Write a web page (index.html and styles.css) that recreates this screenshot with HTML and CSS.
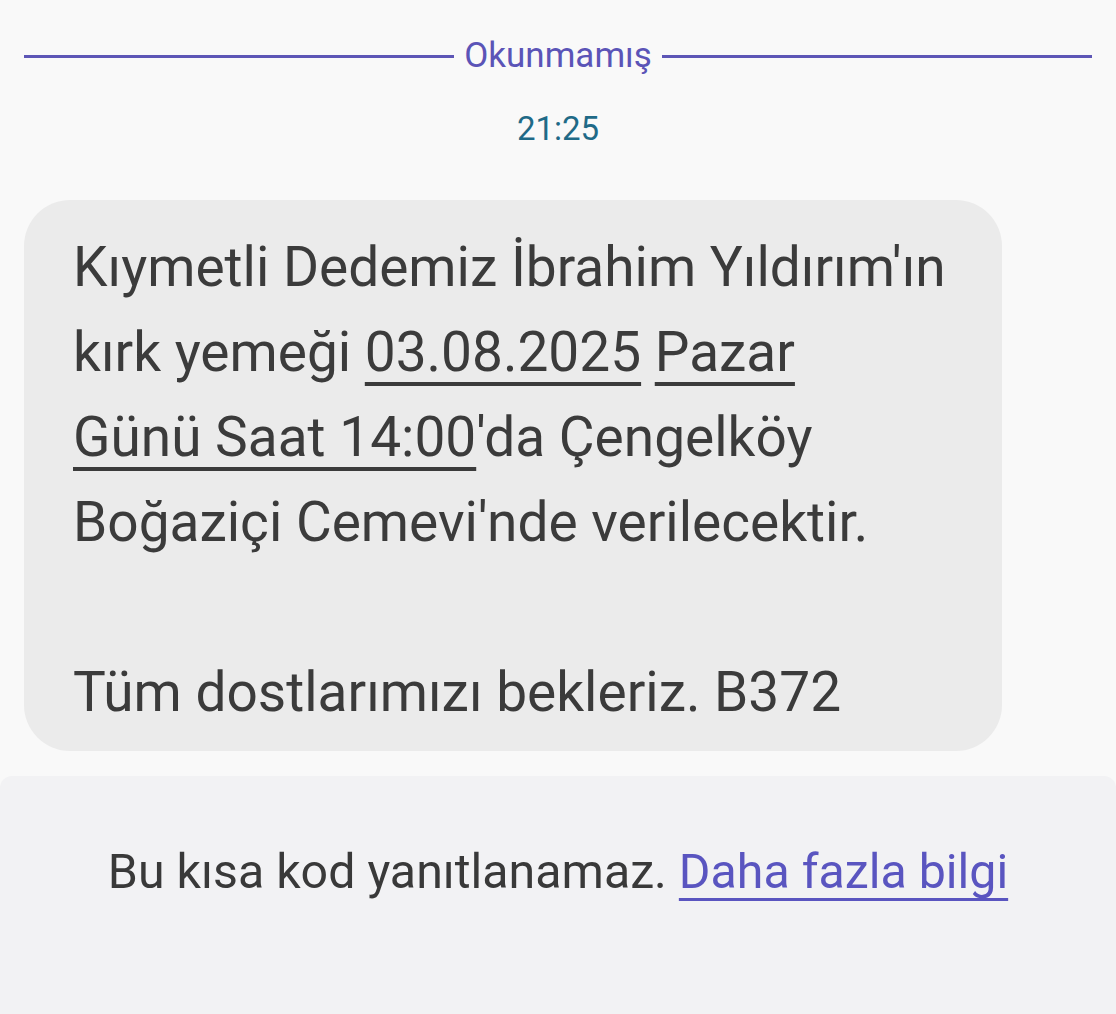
FILE: index.html
```html
<!DOCTYPE html>
<html lang="tr">
<head>
    <meta charset="UTF-8">
    <meta name="viewport" content="width=device-width, initial-scale=1.0">
    <title>Mesajlar</title>
    <link rel="stylesheet" href="styles.css">
</head>
<body>
    <main class="thread">
        <!-- Unread divider -->
        <div class="unread-divider">
            <span class="unread-line"></span>
            <span class="unread-label">Okunmamış</span>
            <span class="unread-line"></span>
        </div>

        <div class="timestamp">21:25</div>

        <div class="bubble">
            <p>Kıymetli Dedemiz İbrahim Yıldırım'ın kırk yemeği <u>03.08.2025</u> <u>Pazar<br>Günü Saat 14:00</u>'da Çengelköy Boğaziçi Cemevi'nde verilecektir.</p>
            <p class="gap">Tüm dostlarımızı bekleriz. B372</p>
        </div>
    </main>

    <footer class="reply-note">
        <p>Bu kısa kod yanıtlanamaz. <a href="#" class="more-link">Daha fazla bilgi</a></p>
    </footer>
</body>
</html>
```

FILE: styles.css
```css
/* Global Styles */
body {
    margin: 0;
    background-color: #f9f9f9;
    font-family: Roboto, 'Noto Sans', sans-serif;
    color: #3b3b3b;
    height: 1014px;
    display: flex;
    flex-direction: column;
    overflow: hidden;
}

.thread {
    padding: 0 24px;
}

/* Unread divider */
.unread-divider {
    display: flex;
    align-items: center;
    gap: 10px;
    margin-top: 36px;
    height: 40px;
}

.unread-line {
    flex: 1;
    height: 3px;
    background-color: #5d56b6;
}

.unread-label {
    font-size: 35px;
    color: #5b54b7;
    line-height: 40px;
}

.timestamp {
    text-align: center;
    font-size: 33px;
    color: #1f6a87;
    margin-top: 33px;
    line-height: 40px;
}

/* Message bubble */
.bubble {
    margin-top: 51px;
    width: 978px;
    box-sizing: border-box;
    background-color: #ebebeb;
    border-radius: 46px;
    padding: 25px 40px 16px 49px;
}

.bubble p {
    margin: 0;
    font-size: 55px;
    line-height: 85px;
}

.bubble .gap {
    margin-top: 85px;
}

.bubble u {
    text-decoration-thickness: 4px;
    text-underline-offset: 11px;
}

/* Bottom note */
.reply-note {
    flex: 1;
    margin-top: 25px;
    background-color: #f2f2f4;
    border-radius: 12px 12px 0 0;
    display: flex;
    justify-content: center;
    padding-top: 66px;
}

.reply-note p {
    margin: 0;
    font-size: 48.3px;
    line-height: 60px;
    color: #393939;
}

.more-link {
    color: #5a55c0;
    text-decoration-thickness: 3px;
    text-underline-offset: 10px;
}
```
